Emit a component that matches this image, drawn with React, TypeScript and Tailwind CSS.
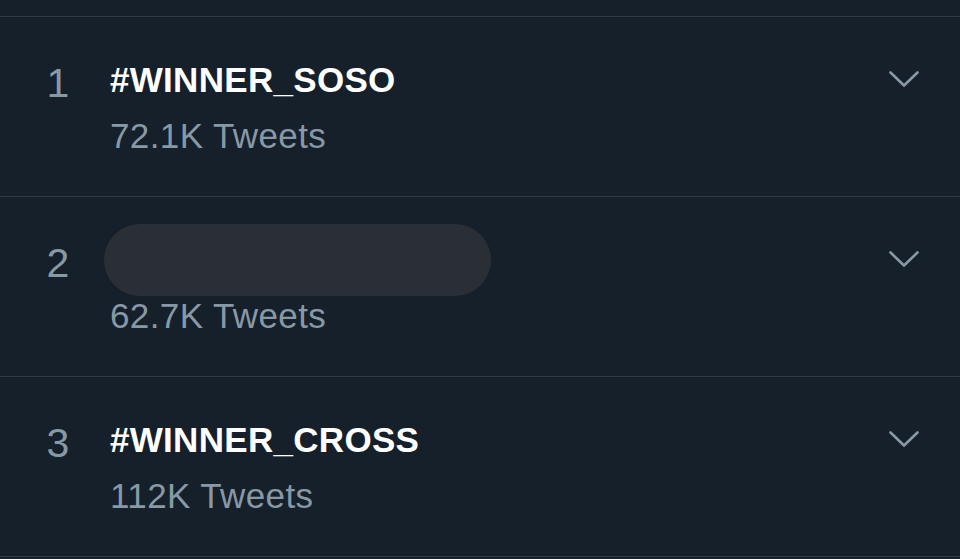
import React from "react";

type Trend = { rank: number; tag: string | null; count: string };

const trends: Trend[] = [
  { rank: 1, tag: "#WINNER_SOSO", count: "72.1K Tweets" },
  { rank: 2, tag: null, count: "62.7K Tweets" },
  { rank: 3, tag: "#WINNER_CROSS", count: "112K Tweets" },
];

const Chevron = () => (
  <svg width="30" height="16" viewBox="0 0 30 16" fill="none" className="mt-[54px] mr-[41px] ml-auto shrink-0">
    <polyline points="1.5,1.5 15,14.5 28.5,1.5" stroke="#8899a6" strokeWidth="2.6" strokeLinecap="round" strokeLinejoin="round" />
  </svg>
);

const TrendRow = ({ trend }: { trend: Trend }) => (
  <div className="flex h-[180px] border-t border-[#2f3b46] pl-[34px]">
    <div className="mt-[46px] w-[48px] text-center text-[41px] leading-[41px] text-[#8899a6]">{trend.rank}</div>
    <div className="ml-[28px] flex flex-col">
      {trend.tag ? (
        <div className="mt-[43px] h-[40px] text-[35px] font-bold leading-[40px] tracking-[0.3px] text-white">{trend.tag}</div>
      ) : (
        <div className="mt-[43px] flex h-[40px] items-center">
          <div className="-my-4 -ml-[6px] h-[72px] w-[387px] rounded-full bg-[#2a2f35]"></div>
        </div>
      )}
      <div className="mt-[16px] text-[35px] leading-[40px] tracking-[0.4px] text-[#8899a6]">{trend.count}</div>
    </div>
    <Chevron />
  </div>
);

export default function App() {
  return (
    <div className="h-[559px] w-[960px] overflow-hidden bg-[#15202b]" style={{ fontFamily: '"Liberation Sans", Arial, sans-serif' }}>
      <div className="h-[16px]"></div>
      {trends.map((t) => (
        <TrendRow key={t.rank} trend={t} />
      ))}
      <div className="border-t border-[#2f3b46]"></div>
    </div>
  );
}
